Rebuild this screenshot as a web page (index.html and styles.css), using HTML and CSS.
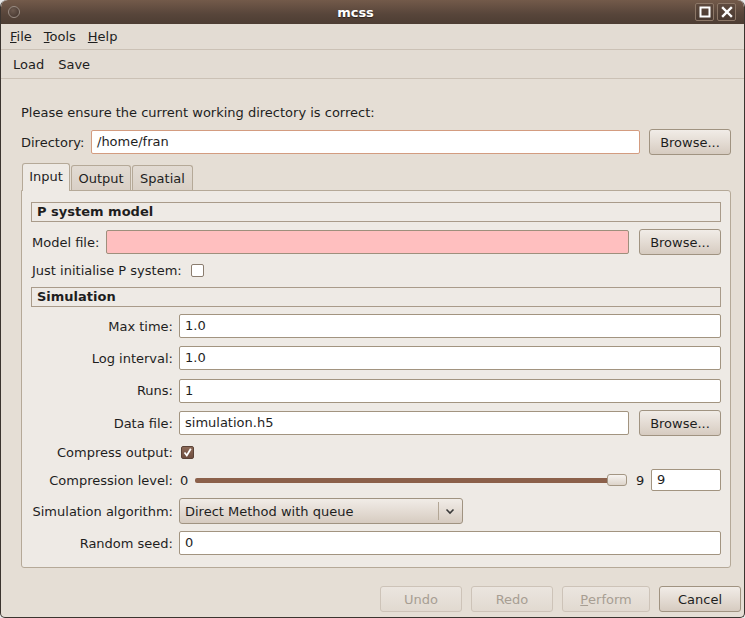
FILE: index.html
```html
<!DOCTYPE html>
<html>
<head>
<meta charset="utf-8">
<link rel="stylesheet" href="styles.css">
</head>
<body>
<div class="window">
  <div class="titlebar">
    <span class="ticon"></span>
    <span class="title">mcss</span>
    <div class="wbtns">
      <span class="wbtn"><svg width="12" height="12" viewBox="0 0 12 12"><rect x="1.5" y="1.5" width="9" height="9" fill="none" stroke="#fff" stroke-width="2"/></svg></span>
      <span class="wbtn"><svg width="12" height="12" viewBox="0 0 12 12"><path d="M2 2 L10 10 M10 2 L2 10" stroke="#fff" stroke-width="2.4" stroke-linecap="square"/></svg></span>
    </div>
  </div>
  <div class="menubar">
    <span><u>F</u>ile</span><span><u>T</u>ools</span><span><u>H</u>elp</span>
  </div>
  <div class="toolbar">
    <span>Load</span><span>Save</span>
  </div>
  <div class="content">
    <div class="intro">Please ensure the current working directory is correct:</div>
    <div class="dirrow">
      <span class="lbl">Directory:</span>
      <div class="entry focus">/home/fran</div>
      <div class="btn">Browse...</div>
    </div>
    <div class="tabs">
      <div class="tab active t1">Input</div>
      <div class="tab t2">Output</div>
      <div class="tab t3">Spatial</div>
    </div>
    <div class="panel">
      <div class="section">P system model</div>
      <div class="modelrow">
        <span class="lbl">Model file:</span>
        <div class="entry pink"></div>
        <div class="btn">Browse...</div>
      </div>
      <div class="initrow">
        <span class="lbl">Just initialise P system:</span>
        <span class="check"></span>
      </div>
      <div class="section sim">Simulation</div>
      <div class="form">
        <span class="flbl">Max time:</span>
        <div class="entry">1.0</div>
        <span class="flbl">Log interval:</span>
        <div class="entry">1.0</div>
        <span class="flbl">Runs:</span>
        <div class="entry">1</div>
        <span class="flbl">Data file:</span>
        <div class="ctl-row">
          <div class="entry grow">simulation.h5</div>
          <div class="btn">Browse...</div>
        </div>
        <span class="flbl">Compress output:</span>
        <div class="ctl-check"><span class="check on"><svg width="11" height="11" viewBox="0 0 11 11"><path d="M2.5 5.5 L4.8 8.5 L8.8 1.8" fill="none" stroke="#fff" stroke-width="1.8"/></svg></span></div>
        <span class="flbl">Compression level:</span>
        <div class="slider-row">
          <span class="sval">0</span>
          <div class="track"><span class="thumb"></span></div>
          <span class="sval nine">9</span>
          <div class="entry small">9</div>
        </div>
        <span class="flbl">Simulation algorithm:</span>
        <div class="ctl-combo">
          <div class="combo">
            <span class="ctext">Direct Method with queue</span>
            <span class="csep"></span>
            <svg class="chev" width="10" height="7" viewBox="0 0 10 7"><path d="M1.5 1.5 L5 5 L8.5 1.5" fill="none" stroke="#3a3a3a" stroke-width="1.6"/></svg>
          </div>
        </div>
        <span class="flbl">Random seed:</span>
        <div class="entry">0</div>
      </div>
    </div>
  </div>
  <div class="actions">
    <div class="btn dis">Undo</div>
    <div class="btn dis">Redo</div>
    <div class="btn dis wide"><u>P</u>erform</div>
    <div class="btn">Cancel</div>
  </div>
</div>
</body>
</html>
```
FILE: styles.css
```css
* { box-sizing: border-box; }
html, body { margin: 0; padding: 0; }
body {
  background: #e8e8e8;
  font-family: "DejaVu Sans", sans-serif;
  font-size: 13px;
  color: #1e1e1e;
}
.window {
  width: 745px;
  height: 618px;
  background: #e5ded5;
  border-radius: 7px 7px 5px 5px;
  border: 1px solid #3b342f;
  border-top: none;
  overflow: hidden;
  display: flex;
  flex-direction: column;
}
.titlebar {
  height: 24px;
  flex: none;
  background: linear-gradient(#735a4a, #57453a 60%, #4d3d33);
  display: flex;
  align-items: center;
  border-radius: 7px 7px 0 0;
}
.ticon {
  width: 12px; height: 12px;
  margin-left: 7px;
  border-radius: 50%;
  border: 1px solid #9a8d84;
  background: radial-gradient(circle at 40% 35%, #6e5b50, #3e3029);
}
.title {
  flex: 1;
  text-align: center;
  color: #fff;
  font-weight: bold;
  font-size: 13px;
  padding-right: 4px;
  text-shadow: 0 1px 1px #2a201a;
}
.wbtns { display: flex; gap: 3px; margin-right: 8px; }
.wbtn {
  width: 19px; height: 18px;
  border: 1px solid #8c7767;
  border-radius: 2px;
  background: linear-gradient(#5e4a3e, #4a3a31);
  display: flex; align-items: center; justify-content: center;
}
.menubar {
  height: 26px;
  flex: none;
  display: flex;
  align-items: center;
  gap: 12px;
  padding-left: 9px;
  border-bottom: 1px solid #cbc1b5;
  background: #e3dcd3;
}
.toolbar {
  height: 29px;
  flex: none;
  display: flex;
  align-items: center;
  gap: 14px;
  padding-left: 12px;
  border-bottom: 1px solid #cbc1b5;
  background: #e3dcd3;
}
.content {
  flex: none;
  padding: 25px 13px 0 20px;
}
.intro { height: 18px; line-height: 18px; }
.dirrow {
  display: flex;
  align-items: center;
  height: 26px;
  margin-top: 7px;
}
.dirrow .lbl { width: 70px; }
.entry {
  height: 24px;
  line-height: 22px;
  background: #fff;
  border: 1px solid #a29480;
  border-radius: 2px;
  padding-left: 5px;
  white-space: nowrap;
}
.dirrow .entry { flex: 1; }
.entry.focus { border-color: #d39c80; }
.entry.pink { background: #ffbfbf; flex: 1; border-color: #9e8f7c; }
.btn {
  height: 26px;
  width: 82px;
  border: 1px solid #a09381;
  border-radius: 3px;
  background: linear-gradient(#f1ece7, #e4dcd4 50%, #d6cbc0);
  display: flex;
  align-items: center;
  justify-content: center;
  flex: none;
  margin-left: 9px;
}
.tabs {
  display: flex;
  margin-top: 8px;
  margin-left: 1px;
  height: 27px;
  align-items: flex-end;
  position: relative;
  z-index: 1;
}
.tab {
  height: 25px;
  border: 1px solid #b5a998;
  border-bottom: none;
  border-radius: 3px 3px 0 0;
  background: linear-gradient(#e2dbd3, #d9d0c6);
  display: flex;
  align-items: center;
  justify-content: center;
  margin-right: 1px;
}
.t1 { width: 48px; }
.t2 { width: 60px; }
.t3 { width: 61px; }
.tab.active {
  height: 28px;
  margin-bottom: -1px;
  background: #eeeae5;
  padding-bottom: 2px;
}
.panel {
  height: 378px;
  border: 1px solid #b5a998;
  border-radius: 0 3px 3px 3px;
  background: #eeeae5;
  padding: 11px 9px 0 9px;
}
.section {
  height: 20px;
  border: 1px solid #a99b8a;
  font-weight: bold;
  padding-left: 5px;
  line-height: 18px;
}
.modelrow {
  display: flex;
  align-items: center;
  height: 26px;
  margin-top: 7px;
}
.modelrow .lbl { margin-left: 1px; width: 74px; }
.modelrow .btn { margin-left: 10px; }
.initrow {
  display: flex;
  align-items: center;
  height: 18px;
  margin-top: 6px;
  padding-left: 1px;
}
.initrow .check { margin-left: 9px; }
.check {
  width: 13px; height: 13px;
  border: 1px solid #8b7d6f;
  border-radius: 2px;
  background: #fff;
  display: inline-flex;
  align-items: center;
  justify-content: center;
}
.check.on {
  background: linear-gradient(#8d6a58, #6e4d3e);
  border-color: #5a4236;
}
.section.sim { margin-top: 8px; }
.form {
  display: grid;
  grid-template-columns: 142px 1fr;
  grid-template-rows: 26px 26px 27px 26px 20px 24px 26px 26px;
  column-gap: 6px;
  row-gap: 6px;
  margin-top: 6px;
  align-items: center;
}
.flbl { text-align: right; }
.form > .entry { height: 24px; }
.ctl-row { display: flex; align-items: center; }
.ctl-row .grow { flex: 1; }
.ctl-row .btn { margin-left: 10px; }
.ctl-check { padding-left: 2px; display: flex; }
.slider-row { display: flex; align-items: center; height: 24px; }
.sval { width: 8px; margin-left: 1px; }
.sval.nine { margin-left: 9px; }
.track {
  flex: 1;
  margin-left: 7px;
  height: 5px;
  background: #8b604a;
  border-radius: 2px;
  position: relative;
}
.thumb {
  position: absolute;
  right: 0;
  top: -4px;
  width: 20px;
  height: 12px;
  border: 1px solid #a39683;
  border-radius: 3px;
  background: linear-gradient(#f7f4f1, #ddd4ca);
}
.entry.small { width: 70px; margin-left: 7px; height: 22px; line-height: 20px; }
.ctl-combo { display: flex; }
.combo {
  width: 284px;
  height: 26px;
  border: 1px solid #a09381;
  border-radius: 3px;
  background: linear-gradient(#f1ece7, #e4dcd4 50%, #d6cbc0);
  display: flex;
  align-items: center;
  padding-left: 5px;
}
.ctext { flex: 1; }
.csep { width: 1px; height: 18px; background: #b3a695; margin-right: 6px; }
.chev { margin-right: 7px; }
.actions {
  display: flex;
  justify-content: flex-end;
  padding-right: 3px;
  margin-top: 18px;
}
.actions .btn { height: 26px; }
.btn.wide { width: 88px; }
.btn.dis {
  color: #a79e93;
  border-color: #cdc3b8;
  background: linear-gradient(#ebe5df, #e1d9d0);
}
```
